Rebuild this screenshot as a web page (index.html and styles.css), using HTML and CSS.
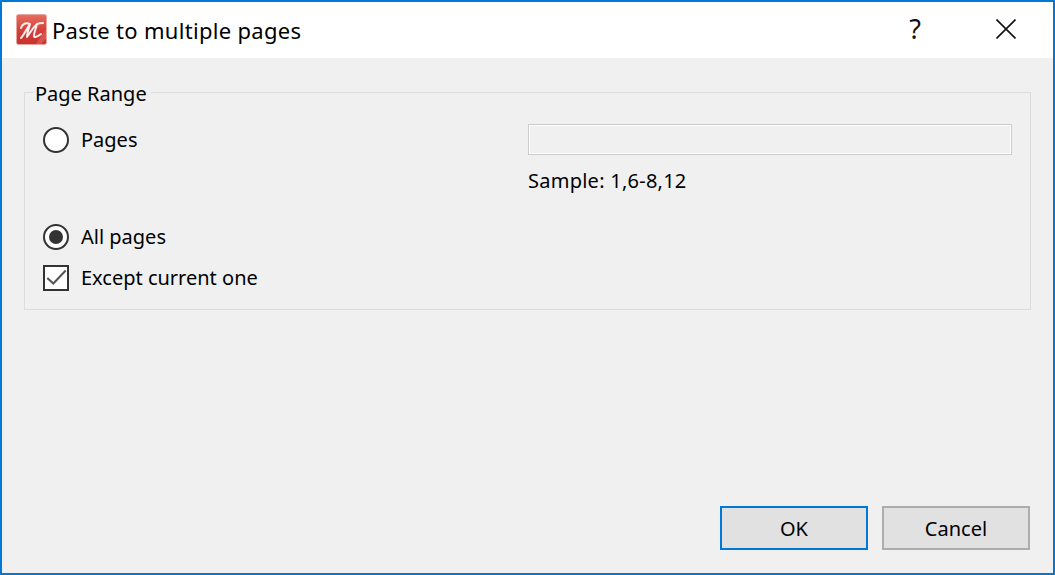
FILE: index.html
```html
<!DOCTYPE html>
<html lang="en">
<head>
  <meta charset="UTF-8" />
  <title>Paste to multiple pages</title>
  <link rel="stylesheet" href="styles.css">
</head>
<body>
  <div class="dialog">
    <div class="titlebar">
      <svg class="app-icon" width="31" height="31" viewBox="0 0 31 31">
        <defs>
          <linearGradient id="iconBg" x1="0" y1="0" x2="0" y2="1">
            <stop offset="0" stop-color="#e8705f"/>
            <stop offset="0.5" stop-color="#d4403a"/>
            <stop offset="1" stop-color="#c8322f"/>
          </linearGradient>
        </defs>
        <rect x="0.5" y="0.5" width="30" height="30" rx="2" fill="url(#iconBg)" stroke="#e9a59e"/>
        <path d="M20 30 L30 15 L30 25 L25 30 Z" fill="#d9544c"/>
        <path d="M5 24 C8 21 11 14 14 10 C13 14 11 19 11 23 C14 19 18 12 21 10 C20 14 18 19 18 22 C18 24 21 23 25 20 M21 10 C23 9 25 9 27 9 M5 14 C6 10 10 8 14 10" fill="none" stroke="#fbeeee" stroke-width="2" stroke-linecap="round" stroke-linejoin="round"/>
      </svg>
      <span class="title">Paste to multiple pages</span>
      <span class="help">?</span>
      <svg class="close" width="20" height="20" viewBox="0 0 20 20">
        <path d="M0.5 0.5 L19.5 19.5 M19.5 0.5 L0.5 19.5" stroke="#111" stroke-width="1.6" fill="none"/>
      </svg>
    </div>

    <div class="content">
      <fieldset class="group">
        <legend>Page Range</legend>
        <div class="row-pages">
          <label class="opt"><span class="radio"></span>Pages</label>
          <div class="range">
            <input class="range-input" type="text" disabled />
            <div class="sample">Sample: 1,6-8,12</div>
          </div>
        </div>
        <label class="opt opt-all"><span class="radio checked"></span>All pages</label>
        <label class="opt opt-except">
          <span class="check">
            <svg width="22" height="22" viewBox="0 0 22 22"><path d="M2.3 11 L8.3 16.5 L20.7 3.5" fill="none" stroke="#555" stroke-width="2"/></svg>
          </span>Except current one
        </label>
      </fieldset>

      <div class="buttons">
        <button class="btn btn-default">OK</button>
        <button class="btn">Cancel</button>
      </div>
    </div>
  </div>
</body>
</html>
```

FILE: styles.css
```css
html, body {
  margin: 0;
  height: 100%;
}

body {
  font-family: 'Noto Sans', sans-serif;
  font-size: 20px;
  color: #000;
  background: #f0f0f0;
  overflow: hidden;
}

.dialog {
  box-sizing: border-box;
  height: 575px;
  border: 2px solid #0078d7;
  display: flex;
  flex-direction: column;
}

.titlebar {
  height: 56px;
  flex: none;
  background: #fff;
  display: flex;
  align-items: center;
  padding-left: 14px;
}

.app-icon {
  margin-right: 5px;
  margin-top: -1px;
}

.title {
  font-size: 22px;
  letter-spacing: 0.3px;
  flex: 1;
}

.help {
  font-size: 27px;
  color: #111;
  margin-right: 75px;
  margin-top: -4px;
}

.close {
  margin-right: 37px;
  margin-top: -2px;
}

.content {
  flex: 1;
  display: flex;
  flex-direction: column;
  padding: 0 22px;
}

.group {
  margin: 18px 0 0;
  height: 234px;
  box-sizing: border-box;
  border: 1px solid #dcdcdc;
  padding: 0 18px;
  min-width: 0;
}

.group legend {
  padding: 4px 4px 0 2px;
  margin-left: -10px;
  line-height: 28px;
}

.opt {
  display: flex;
  align-items: center;
  gap: 12px;
  line-height: 28px;
}

.row-pages {
  display: flex;
  align-items: flex-start;
  margin-top: 16px;
}

.row-pages .opt {
  width: 485px;
  flex: none;
  margin-top: 2px;
}

.range {
  flex: 1;
}

.range-input {
  display: block;
  box-sizing: border-box;
  width: 484px;
  height: 31px;
  background: #f0f0f0;
  border: 1px solid #ccc;
  box-shadow: inset 0 0 0 1px #fff;
  padding: 0;
}

.sample {
  margin-top: 12px;
  line-height: 28px;
  letter-spacing: 0.25px;
}

.radio {
  box-sizing: border-box;
  width: 26px;
  height: 26px;
  border: 2px solid #333;
  border-radius: 50%;
  background: #fff;
  flex: none;
  display: flex;
  align-items: center;
  justify-content: center;
}

.radio.checked::after {
  content: "";
  width: 14px;
  height: 14px;
  border-radius: 50%;
  background: #333;
}

.opt-all {
  margin-top: 28px;
}

.opt-except {
  margin-top: 13px;
}

.check {
  box-sizing: border-box;
  width: 26px;
  height: 26px;
  border: 2px solid #333;
  background: #fff;
  flex: none;
  display: flex;
}

.buttons {
  margin-top: auto;
  display: flex;
  justify-content: flex-end;
  gap: 14px;
  margin-bottom: 23px;
  margin-right: 1px;
}

.btn {
  box-sizing: border-box;
  width: 148px;
  height: 44px;
  background: #e1e1e1;
  border: 2px solid #adadad;
  font-family: inherit;
  font-size: 20px;
  color: #000;
  padding: 0;
}

.btn-default {
  border-color: #0078d7;
}
```
